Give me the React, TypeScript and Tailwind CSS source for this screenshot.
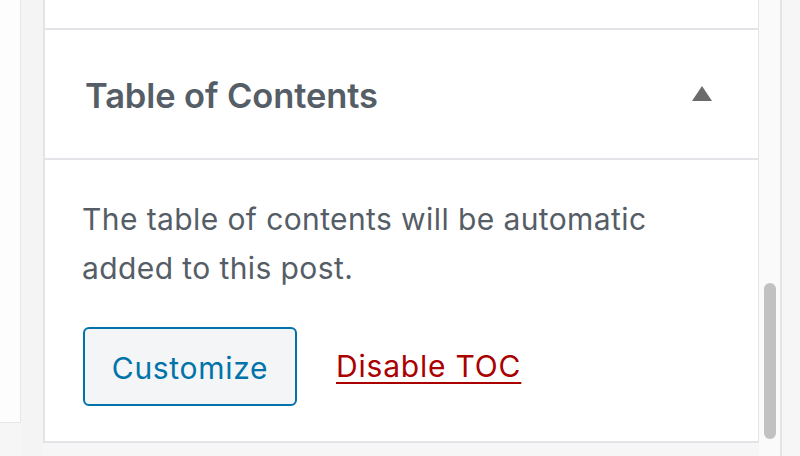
import React from "react";

export default function App() {
  return (
    <div
      className="w-[800px] h-[456px] overflow-hidden bg-[#f6f6f6] flex"
      style={{ fontFamily: "Inter, 'Liberation Sans', sans-serif" }}
    >
      {/* left strip */}
      <div className="w-[21px] shrink-0">
        <div className="h-[423px] bg-[#fdfdfd] border-r border-b border-[#e6e6e6]" />
      </div>
      <div className="w-[22px] shrink-0 bg-[#f4f4f4]" />
      {/* main scroll area */}
      <div className="w-[739px] shrink-0 flex border-r-2 border-[#e4e4e4]">
        <div className="w-[716px] shrink-0 flex flex-col">
          <div className="bg-white border-l-2 border-r border-[#e2e4e7] flex flex-col">
            <div className="h-[30px] border-b-2 border-[#e2e4e7]" />
            <div className="h-[130px] border-b-2 border-[#e2e4e7] flex items-center justify-between pl-[40px] pr-[46px]">
              <span className="text-[34.5px] font-semibold text-[#555d66] leading-[40px] tracking-[-0.1px] pt-[4px]">
                Table of Contents
              </span>
              <svg width="20" height="15" viewBox="0 0 20 15" className="-mt-[1px]">
                <polygon points="10,0 20,15 0,15" fill="#6b6b6b" />
              </svg>
            </div>
            <div className="h-[283px] border-b-2 border-[#e2e4e7] pl-[37px] pt-[35px]">
              <p className="text-[30px] leading-[49px] tracking-[0.4px] text-[#555d66]">
                The table of contents will be automatic
                <br />
                added to this post.
              </p>
              <div className="flex items-center mt-[34px] ml-[1px]">
                <button className="w-[214px] h-[79px] rounded-[6px] border-2 border-[#0073aa] bg-[#f3f5f6] text-[#0073aa] text-[30px] tracking-[0.7px] leading-none pt-[2px]">
                  Customize
                </button>
                <a
                  href="#"
                  className="ml-[39px] text-[30px] tracking-[0.8px] text-[#a00] underline decoration-2 underline-offset-[5px]"
                >
                  Disable TOC
                </a>
              </div>
            </div>
          </div>
        </div>
        {/* scrollbar */}
        <div className="w-[21px] shrink-0 bg-[#fafafa] flex flex-col">
          <div className="h-[283px]" />
          <div className="mx-auto w-[12px] h-[156px] rounded-full bg-[#c1c1c1]" />
          <div className="flex-1" />
        </div>
      </div>
    </div>
  );
}
